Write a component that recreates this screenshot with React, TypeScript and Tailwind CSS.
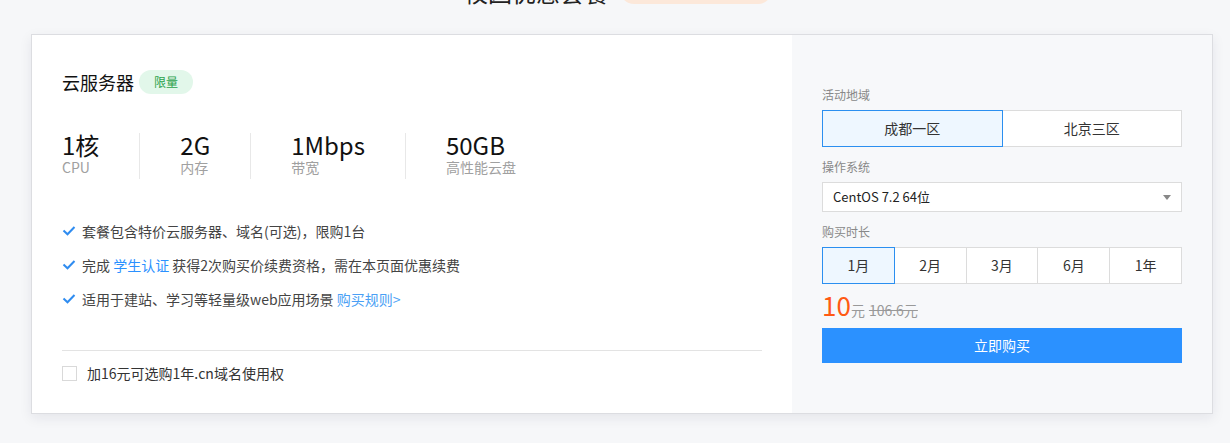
import { FC } from "react";

const specs = [
  { value: "1核", label: "CPU" },
  { value: "2G", label: "内存" },
  { value: "1Mbps", label: "带宽" },
  { value: "50GB", label: "高性能云盘" },
];

const regions = ["成都一区", "北京三区"];
const durations = ["1月", "2月", "3月", "6月", "1年"];

const Check: FC = () => (
  <svg width="14" height="10" viewBox="0 0 14 10" className="shrink-0">
    <path d="M1.5 4.5l4 3.8L12.5 1" fill="none" stroke="#2f8cf0" strokeWidth="2" />
  </svg>
);

export default function App() {
  return (
    <div className="min-h-[443px] w-[1230px] overflow-hidden bg-[#f6f7f9] font-['Noto_Sans_CJK_SC',sans-serif] text-[#333]">
      <div className="flex h-[34px] items-start justify-center pl-[6px]">
        <div className="-mt-[24px] flex h-8 items-start gap-[12px]">
          <h1 className="text-[24px] leading-8 text-[#222]">校园优惠套餐</h1>
          <span className="h-[28px] w-[152px] rounded-full bg-[#fce8da]" />
        </div>
      </div>

      <div className="ml-[31px] flex h-[380px] w-[1182px] border border-[#dcdde1] shadow-[0_4px_12px_rgba(20,30,60,0.08)]">
        {/* left: package info */}
        <div className="flex w-[760px] flex-col bg-white px-[30px] pt-[35px]">
          <div className="flex h-6 items-center gap-[5px]">
            <span className="text-[18px] leading-6 text-[#111]">云服务器</span>
            <span className="flex h-6 items-center rounded-full bg-[#e2f7ea] px-[15px] text-[12px] text-[#2ba24c]">
              限量
            </span>
          </div>

          <div className="mt-[39px] flex">
            {specs.map((s, i) => (
              <div
                key={s.label}
                className={`flex h-[46px] flex-col pr-10 ${i > 0 ? "border-l border-[#e8e8e8] pl-10" : ""}`}
              >
                <span className="text-[24px] leading-6 text-[#111]">{s.value}</span>
                <span className="text-[14px] leading-5 text-[#a0a0a0]">{s.label}</span>
              </div>
            ))}
          </div>

          <ul className="mt-[42px] flex flex-col gap-[14px] text-[14px] leading-5 text-[#444]">
            <li className="flex items-center gap-[6px]">
              <Check />
              <span>套餐包含特价云服务器、域名(可选)，限购1台</span>
            </li>
            <li className="flex items-center gap-[6px]">
              <Check />
              <span>
                完成 <a className="text-[#2b91ff]">学生认证</a> 获得2次购买价续费资格，需在本页面优惠续费
              </span>
            </li>
            <li className="flex items-center gap-[6px]">
              <Check />
              <span>
                适用于建站、学习等轻量级web应用场景 <a className="text-[#4a9ff5]">购买规则&gt;</a>
              </span>
            </li>
          </ul>

          <div className="mt-[41px] h-px bg-[#e3e3e3]" />

          <label className="mt-[12px] flex h-5 items-center gap-[10px] text-[14px] text-[#333]">
            <span className="h-[15px] w-[15px] border border-[#d9d9d9] bg-white" />
            加16元可选购1年.cn域名使用权
          </label>
        </div>

        {/* right: purchase options */}
        <div className="flex flex-1 flex-col bg-[#f7f8fa] px-[30px] pt-[51px]">
          <p className="text-[12px] leading-[18px] text-[#888]">活动地域</p>
          <div className="mt-[6px] flex h-[37px]">
            {regions.map((r, i) => (
              <button
                key={r}
                className={`flex-1 border text-[14px] ${
                  i === 0
                    ? "relative z-10 border-[#2b8ff0] bg-[#eef7ff]"
                    : "-ml-px border-[#dcdcdc] bg-white"
                }`}
              >
                {r}
              </button>
            ))}
          </div>

          <p className="mt-[11px] text-[12px] leading-[18px] text-[#888]">操作系统</p>
          <div className="mt-[6px] flex h-[30px] w-[360px] items-center justify-between border border-[#dcdcdc] bg-white pl-[10px] pr-[10px]">
            <span className="text-[13px] text-[#222]">CentOS 7.2 64位</span>
            <span className="h-0 w-0 border-x-[4px] border-t-[5px] border-x-transparent border-t-[#888]" />
          </div>

          <p className="mt-[11px] text-[12px] leading-[18px] text-[#888]">购买时长</p>
          <div className="mt-[6px] flex h-[37px]">
            {durations.map((d, i) => (
              <button
                key={d}
                className={`flex-1 border text-[14px] ${
                  i === 0
                    ? "relative z-10 border-[#2b8ff0] bg-[#eef7ff]"
                    : "-ml-px border-[#dcdcdc] bg-white"
                }`}
              >
                {d}
              </button>
            ))}
          </div>

          <div className="mt-[8px] flex items-baseline leading-[26px]">
            <span className="text-[26px] text-[#ff5a14]">10</span>
            <span className="text-[14px] text-[#999]">元</span>
            <span className="ml-[4px] text-[14px] text-[#999] line-through">106.6元</span>
          </div>

          <button className="mt-[5px] h-[35px] w-[360px] bg-[#2b91ff] text-[14px] text-white">立即购买</button>
        </div>
      </div>
    </div>
  );
}
